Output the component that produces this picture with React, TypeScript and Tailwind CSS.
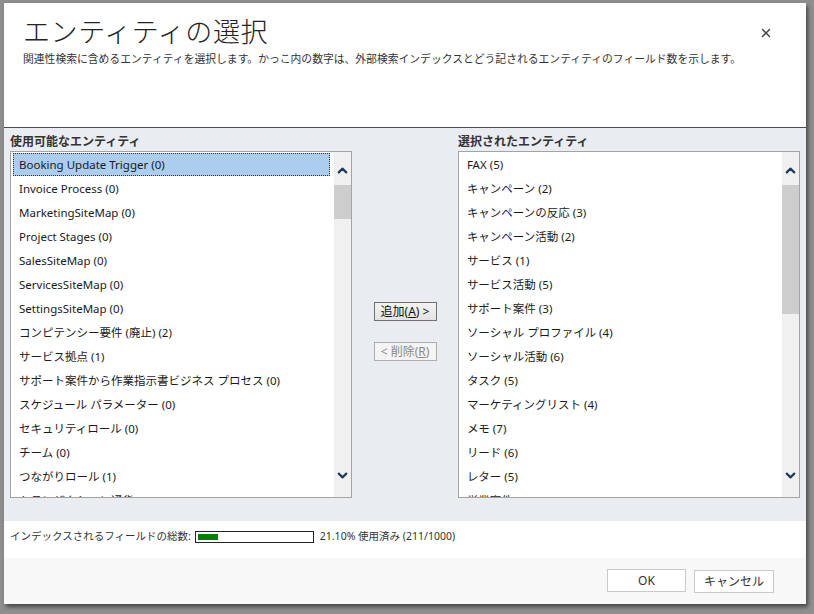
import { ChevronUp, ChevronDown, X } from 'lucide-react';

const available = [
  'Booking Update Trigger (0)',
  'Invoice Process (0)',
  'MarketingSiteMap (0)',
  'Project Stages (0)',
  'SalesSiteMap (0)',
  'ServicesSiteMap (0)',
  'SettingsSiteMap (0)',
  'コンピテンシー要件 (廃止) (2)',
  'サービス拠点 (1)',
  'サポート案件から作業指示書ビジネス プロセス (0)',
  'スケジュール パラメーター (0)',
  'セキュリティロール (0)',
  'チーム (0)',
  'つながりロール (1)',
  'トランザクション通貨 (0)',
];

const selected = [
  'FAX (5)',
  'キャンペーン (2)',
  'キャンペーンの反応 (3)',
  'キャンペーン活動 (2)',
  'サービス (1)',
  'サービス活動 (5)',
  'サポート案件 (3)',
  'ソーシャル プロファイル (4)',
  'ソーシャル活動 (6)',
  'タスク (5)',
  'マーケティングリスト (4)',
  'メモ (7)',
  'リード (6)',
  'レター (5)',
  '営業案件 (5)',
];

const font = { fontFamily: '"Noto Sans", "Noto Sans CJK JP", sans-serif' };

function ListBox({ items, highlight, thumbH }: { items: string[]; highlight?: boolean; thumbH: string }) {
  return (
    <div className="flex h-[347px] border border-[#a3a3a3] bg-white overflow-hidden">
      <div className="flex-1 flex flex-col pt-[1px] px-[2px] overflow-hidden">
        {items.map((t, i) => (
          <div
            key={t}
            className={
              i === 0 && highlight
                ? 'h-[23px] mb-px shrink-0 flex items-center pl-[5px] bg-[#aacdf0] border border-dotted border-[#333] mr-[2px] text-[11.5px] text-[#1a1a1a] whitespace-nowrap'
                : 'h-[24px] shrink-0 flex items-center pl-[6px] text-[11.5px] text-[#1a1a1a] whitespace-nowrap'
            }
          >
            {t}
          </div>
        ))}
      </div>
      <div className="w-[17px] shrink-0 bg-[#f0f0f0] flex flex-col items-center">
        <div className="h-[33px] w-full flex items-end justify-center pb-[7px]">
          <ChevronUp className="w-[15px] h-[15px] text-[#1f3b5c]" strokeWidth={3.5} />
        </div>
        <div className={`w-full bg-[#cdcdcd] ${thumbH}`} />
        <div className="flex-1" />
        <div className="h-[33px] w-full flex items-start justify-center pt-[4px]">
          <ChevronDown className="w-[15px] h-[15px] text-[#1f3b5c]" strokeWidth={3.5} />
        </div>
      </div>
    </div>
  );
}

export default function App() {
  return (
    <div className="w-[814px] h-[614px] bg-[#8f8f8f] overflow-hidden pl-[4px] pt-[3px]" style={font}>
      <div className="w-[802px] h-[601px] bg-white flex flex-col shadow-[2px_3px_4px_rgba(0,0,0,0.5)]">
        {/* Header */}
        <div className="h-[124px] relative pl-[19px] pt-[12px]">
          <h1 className="text-[27px] leading-[34px] text-[#222] font-light tracking-[0.6px]">エンティティの選択</h1>
          <p className="mt-[2px] text-[10.8px] text-[#333]">
            関連性検索に含めるエンティティを選択します。かっこ内の数字は、外部検索インデックスとどう記されるエンティティのフィールド数を示します。
          </p>
          <X className="absolute right-[33px] top-[23px] w-[14px] h-[14px] text-[#444]" strokeWidth={2.5} />
        </div>

        {/* Selection panel */}
        <div className="h-[394px] bg-[#e9ecf1] border-t border-[#4b4b4b] flex px-[6px] pt-[6px]">
          <div className="w-[343px] flex flex-col">
            <div className="text-[12px] font-bold text-[#333] leading-[16px] mb-px">使用可能なエンティティ</div>
            <ListBox items={available} highlight thumbH="h-[34px]" />
          </div>
          <div className="w-[106px] flex flex-col items-center pt-[168px] gap-[21px]">
            <button className="w-[63px] h-[19px] border border-[#707070] bg-gradient-to-b from-[#f2f2f2] to-[#e3e3e3] text-[12px] text-[#111] leading-none flex items-center justify-center">
              追加(<span className="underline">A</span>) &gt;
            </button>
            <button className="w-[63px] h-[19px] border border-[#adadad] bg-[#f4f4f4] text-[12px] text-[#8a8a8a] leading-none flex items-center justify-center">
              &lt; 削除(<span className="underline">R</span>)
            </button>
          </div>
          <div className="w-[343px] flex flex-col">
            <div className="text-[12px] font-bold text-[#333] leading-[16px] mb-px">選択されたエンティティ</div>
            <ListBox items={selected} thumbH="h-[129px]" />
          </div>
        </div>

        {/* Index usage */}
        <div className="h-[37px] flex items-center pl-[6px] pb-[5px] text-[10.5px] text-[#333]">
          <span>インデックスされるフィールドの総数:</span>
          <div className="ml-[4px] w-[119px] h-[12px] border border-[#222] bg-white p-[2px]">
            <div className="h-full bg-[#008000] w-[18%]" />
          </div>
          <span className="ml-[6px]">21.10% 使用済み (211/1000)</span>
        </div>

        {/* Footer */}
        <div className="flex-1 bg-[#f8f8f8] flex justify-end items-start pt-[11px] pr-[32px] gap-[8px]">
          <button className="w-[79px] h-[23px] bg-white border border-[#cacaca] text-[12px] text-[#333]">OK</button>
          <button className="w-[80px] h-[23px] bg-white border border-[#cacaca] text-[12px] text-[#333] mt-px">キャンセル</button>
        </div>
      </div>
    </div>
  );
}
